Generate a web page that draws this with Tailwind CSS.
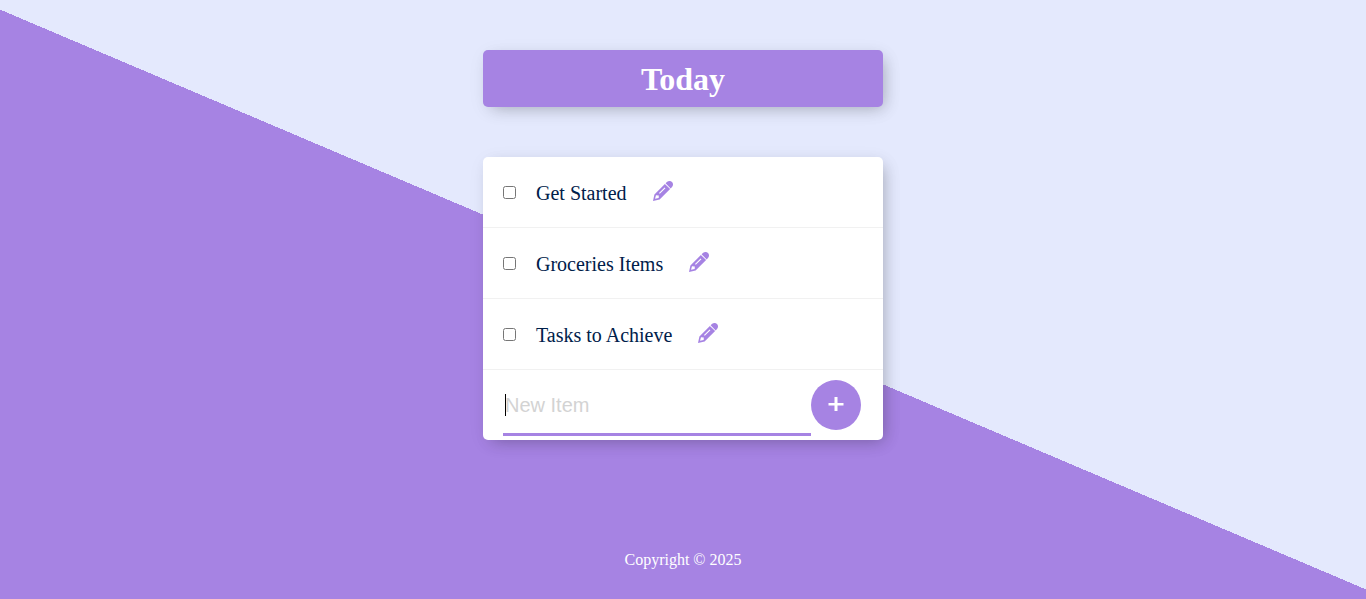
<!DOCTYPE html>
<html lang="en">
<head>
<meta charset="utf-8">
<meta name="viewport" content="width=device-width, initial-scale=1">
<title>Todo List</title>
<script src="https://cdn.jsdelivr.net/npm/@tailwindcss/browser@4"></script>
</head>
<body class="min-h-screen bg-[#e4e9fd] bg-[linear-gradient(23deg,#a683e3_50%,#e4e9fd_50%)] font-['Liberation_Serif',serif]">
<svg class="hidden" aria-hidden="true">
  <symbol id="pencil" viewBox="0 0 20 20">
    <path fill-rule="evenodd" d="M11.900 2.900 17.100 8.100 6.600 18.500 0 20 1.400 13.400ZM3 14.300 2 17.700 5.700 17 5.800 14.500ZM11.600 6.400 6 12 6.800 12.800 12.400 7.200Z"/>
    <path d="M12.600 2.300 14.200.8C15.600-.3 17.800-.3 19 1 20.300 2.200 20.300 4.400 19.200 5.800L17.700 7.400Z"/>
  </symbol>
</svg>
<main class="mx-auto w-full max-w-[400px] pt-[50px]">
  <header class="rounded-[5px] bg-[#a683e3] px-2.5 pt-[11px] pb-[9px] text-center shadow-[5px_5px_15px_-5px_rgba(0,0,0,0.25),2px_4px_20px_rgba(0,0,0,0.06)]">
    <h1 class="text-[32px] leading-[37px] font-bold text-white">Today</h1>
  </header>
  <section class="mt-[50px] rounded-[5px] bg-white shadow-[5px_5px_15px_-5px_rgba(0,0,0,0.25),2px_4px_20px_rgba(0,0,0,0.06)]">
    <ul class="text-xl text-[#00204a]">
      <li class="flex h-[71px] items-center border-b border-[#f1f1f1] px-5">
        <input id="item1" type="checkbox" class="size-[13px]">
        <label for="item1" class="ml-5 pt-0.5">Get Started</label>
        <button type="button" aria-label="Edit Get Started" class="mb-0.5 ml-[26px]"><svg class="size-5 fill-[#a683e3]"><use href="#pencil"/></svg></button>
      </li>
      <li class="flex h-[71px] items-center border-b border-[#f1f1f1] px-5">
        <input id="item2" type="checkbox" class="size-[13px]">
        <label for="item2" class="ml-5 pt-0.5">Groceries Items</label>
        <button type="button" aria-label="Edit Groceries Items" class="mb-0.5 ml-[26px]"><svg class="size-5 fill-[#a683e3]"><use href="#pencil"/></svg></button>
      </li>
      <li class="flex h-[71px] items-center border-b border-[#f1f1f1] px-5">
        <input id="item3" type="checkbox" class="size-[13px]">
        <label for="item3" class="ml-5 pt-0.5">Tasks to Achieve</label>
        <button type="button" aria-label="Edit Tasks to Achieve" class="mb-0.5 ml-[26px]"><svg class="size-5 fill-[#a683e3]"><use href="#pencil"/></svg></button>
      </li>
    </ul>
    <form class="flex h-[70px] items-center pr-[22px] pl-5">
      <div class="relative min-w-0 flex-1 self-start">
        <input type="text" aria-label="New Item" placeholder="New Item" autocomplete="off" class="block h-[66px] w-full border-b-[3px] border-[#a683e3] px-0.5 pt-2 pb-0 font-['Liberation_Sans',sans-serif] text-xl outline-none placeholder:text-[#d3d3d3]">
        <span class="absolute top-6 left-0.5 h-[22px] w-px bg-black" aria-hidden="true"></span>
      </div>
      <button type="submit" aria-label="Add item" class="flex size-[50px] shrink-0 items-center justify-center rounded-full bg-[#a683e3]">
        <svg class="size-4 fill-white" viewBox="0 0 16 16"><path d="M6.500 0h3v5.900h6v2.600h-6V14h-3V8.500H.5V5.900h6Z"/></svg>
      </button>
    </form>
  </section>
</main>
<footer class="mt-[110px] text-center text-base leading-5 text-white">Copyright © 2025</footer>
</body>
</html>
